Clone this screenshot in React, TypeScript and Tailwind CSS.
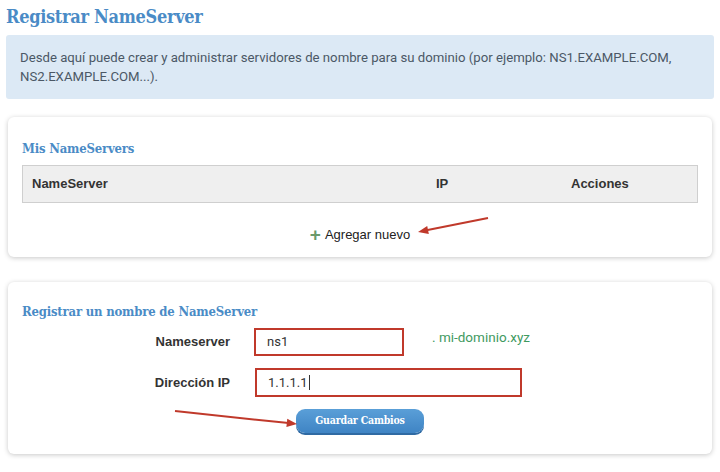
const slab = "font-['DejaVu_Serif',serif] [font-stretch:condensed]";

const Arrow = ({ x1, y1, x2, y2, className }: { x1: number; y1: number; x2: number; y2: number; className: string }) => {
  const angle = Math.atan2(y2 - y1, x2 - x1);
  const len = 11;
  const spread = 0.38;
  const ax = x2 - len * Math.cos(angle - spread);
  const ay = y2 - len * Math.sin(angle - spread);
  const bx = x2 - len * Math.cos(angle + spread);
  const by = y2 - len * Math.sin(angle + spread);
  return (
    <svg className={className} width="720" height="472" viewBox="0 0 720 472">
      <line x1={x1} y1={y1} x2={x2 - 6 * Math.cos(angle)} y2={y2 - 6 * Math.sin(angle)} stroke="#c0392b" strokeWidth="2" />
      <polygon points={`${x2},${y2} ${ax},${ay} ${bx},${by}`} fill="#c0392b" />
    </svg>
  );
};

const App = () => {
  return (
    <div className="relative h-[472px] w-[720px] overflow-hidden bg-white font-['Roboto',sans-serif]">
      <h1 className={`${slab} px-[6px] pt-[5px] text-[18px] font-bold leading-[24px] tracking-[-0.3px] text-[#4a8bc6]`}>
        Registrar NameServer
      </h1>

      <div className="mx-[6px] mt-[6px] rounded-[3px] bg-[#dce9f5] px-[14px] py-[13px] text-[13.2px] leading-[19px] text-[#4b5866]">
        Desde aquí puede crear y administrar servidores de nombre para su dominio (por ejemplo: NS1.EXAMPLE.COM,
        <br />
        NS2.EXAMPLE.COM...).
      </div>

      <div className="mx-[8px] mt-[18px] h-[140px] rounded-[6px] bg-white px-[14px] pt-[24px] shadow-[0_1px_5px_rgba(0,0,0,0.22)]">
        <h2 className={`${slab} text-[13px] font-bold leading-[16px] tracking-[-0.2px] text-[#4a8bc6]`}>Mis NameServers</h2>
        <div className="mt-[8px] grid h-[38px] grid-cols-[1fr_150px_146px] items-center border border-[#cfcfcf] bg-[#efefef] font-['Liberation_Sans',sans-serif] text-[13px] font-bold text-[#333]">
          <div className="pl-[9px]">NameServer</div>
          <div className="pl-[35px]">IP</div>
          <div className="pl-[20px]">Acciones</div>
        </div>
        <div className="mt-[22px] flex items-center justify-center gap-[4px] font-['Liberation_Sans',sans-serif] text-[13px] text-[#222]">
          <span className="text-[19px] font-bold leading-[16px] text-[#6b9a6b]">+</span>
          <span>Agregar nuevo</span>
        </div>
      </div>

      <div className="mx-[8px] mt-[25px] h-[172px] rounded-[6px] bg-white px-[14px] pt-[22px] shadow-[0_1px_5px_rgba(0,0,0,0.22)]">
        <h2 className={`${slab} text-[13px] font-bold leading-[16px] tracking-[-0.2px] text-[#4a8bc6]`}>
          Registrar un nombre de NameServer
        </h2>
        <div className="mt-[8px] flex items-center">
          <label className="w-[208px] text-right font-['Liberation_Sans',sans-serif] text-[13px] font-bold text-[#333]">Nameserver</label>
          <div className="ml-[24px] flex h-[28px] w-[150px] items-center border-2 border-[#c0392b] px-[11px] text-[13px] text-[#333]">ns1</div>
          <div className="ml-[28px] -mt-[10px] text-[13.5px] text-[#3f9a5f]">. mi-dominio.xyz</div>
        </div>
        <div className="mt-[12px] flex items-center">
          <label className="w-[208px] text-right font-['Liberation_Sans',sans-serif] text-[13px] font-bold text-[#333]">Dirección IP</label>
          <div className="ml-[25px] flex h-[29px] w-[267px] items-center border-2 border-[#c0392b] px-[11px] text-[13px] text-[#333]">
            1.1.1.1<span className="ml-[1px] h-[15px] w-[1px] bg-[#333]" />
          </div>
        </div>
        <div className="mt-[12px] flex pl-[274px]">
          <button className={`${slab} h-[24px] w-[128px] rounded-[9px] bg-gradient-to-b from-[#5a9fd8] to-[#3f84c4] text-[10.5px] font-bold tracking-[-0.2px] text-white shadow-[0_2px_0_#2f6aa3]`}>
            Guardar Cambios
          </button>
        </div>
      </div>

      <Arrow x1={488} y1={218} x2={418} y2={232} className="pointer-events-none absolute left-0 top-0" />
      <Arrow x1={175} y1={411} x2={297} y2={424} className="pointer-events-none absolute left-0 top-0" />
    </div>
  );
};

export default App;
